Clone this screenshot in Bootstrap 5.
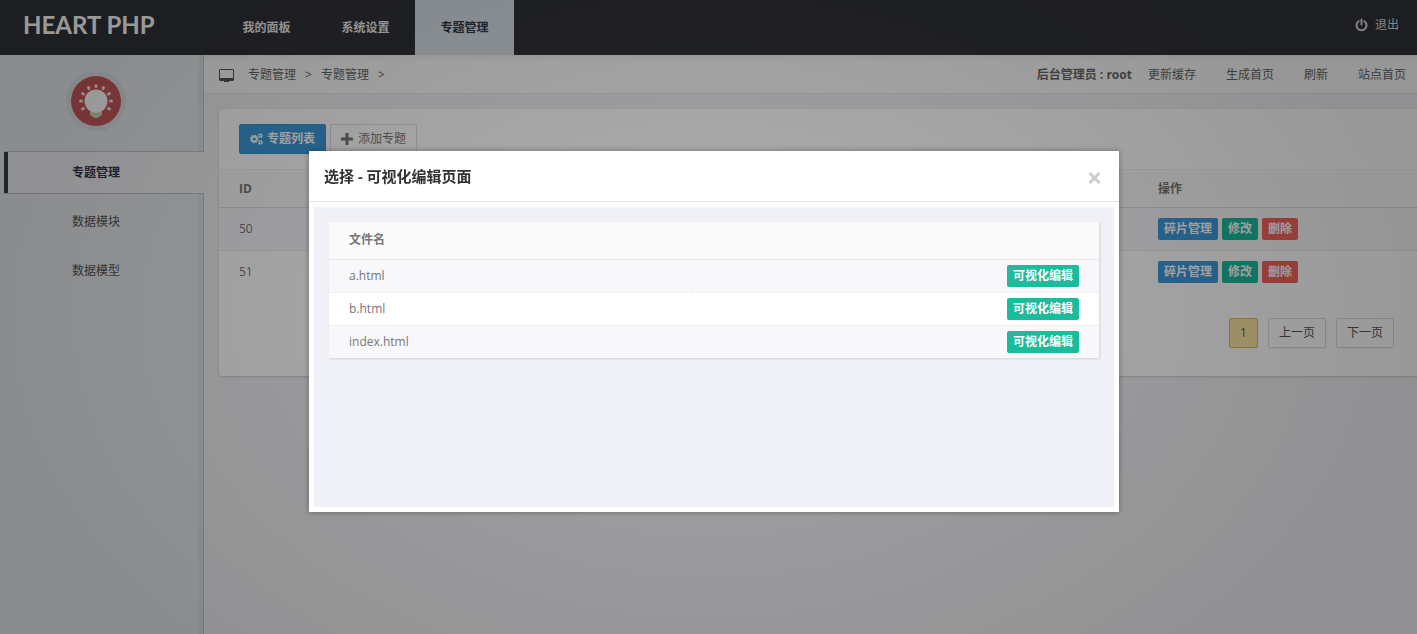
<!DOCTYPE html>
<html lang="zh-CN">
<head>
<meta charset="utf-8">
<meta name="viewport" content="width=device-width, initial-scale=1">
<title>HEART PHP</title>
<link href="https://cdn.jsdelivr.net/npm/bootstrap@5.3.0/dist/css/bootstrap.min.css" rel="stylesheet">
<style>
  body { font: 12px/20px "Open Sans", "Noto Sans CJK SC", sans-serif; color: #777; background: #f0f0f3; }
  a { color: inherit; text-decoration: none; }
  .topbar { height: 55px; background: #313239; color: #fff; }
  .brand { width: 217px; padding-left: 23px; font: 24px/50px Lato, sans-serif; font-weight: 700; color: #fff; }
  .main-tab { width: 99px; height: 55px; line-height: 55px; text-align: center; font-weight: 700; color: #eee; }
  .main-tab.active { background: #d6dfe5; color: #33344a; }
  .logout { padding-right: 18px; height: 50px; color: #ddd; gap: 7px; }
  .sidebar { width: 204px; flex: none; background: linear-gradient(to left, #bfc2c5 1px, #dbe1e4 1px, #dbe1e4 6px, #e6eaed 6px); }
  .bulb { padding: 16px 12px 20px 0; height: 96px; }
  .side-link { height: 49px; line-height: 51px; padding-left: 72px; color: #555; }
  .side-link.active { height: 43px; line-height: 42px; margin-left: 4px; padding-left: 68px; margin-bottom: 2px; background: #f0f0f3; border: 1px solid #bfc2c5; border-width: 1px 0; box-shadow: inset 4px 0 #364150; color: #33344a; font-weight: 700; }
  .crumbs { height: 39px; background: linear-gradient(#eee, #fafafa 6px); border-bottom: 1px solid #e6e6ea; padding: 2px 11px 0 15px; color: #666; }
  .crumbs .trail svg { margin-right: 14px; }
  .crumbs .trail span { padding: 0 9px; }
  .crumbs .links { gap: 30px; }
  .panel { margin: 15px 0 0 15px; background: #fff; border-radius: 3px 0 0 3px; box-shadow: 0 1px 2px rgba(0,0,0,.15); }
  .toolbar { padding: 15px 20px; }
  .tool { height: 30px; font-size: 12px; line-height: 18px; padding: 5px 10px; border-radius: 2px; display: flex; align-items: center; gap: 4px; }
  .tool-blue { background: #3d9ada; border-color: #3891d0; color: #fff; font-weight: 700; }
  .tool-white { background: #fff; border: 1px solid #ddd; color: #777; gap: 5px; }
  .grid { --bs-table-bg: transparent; --bs-table-color: #777; margin: 0; color: #777; }
  .grid > :not(caption) > * > * { padding: 0 20px; height: 43px; border-bottom: 1px dotted #ddd; vertical-align: middle; }
  .grid > thead > tr > th { height: 38px; border-top: 1px solid #f0f0f0; border-bottom: 1px solid #ddd; background: #fafafa; }
  .grid > tbody > tr:nth-child(odd) > td { background: #f8f8fb; }
  .grid > tbody > tr:last-child > td { border-bottom: 0; }
  .ops { width: 279px; }
  .grid-small > thead > tr > th { height: 37px; border-top: 0; border-bottom: 1px solid #e5e5e5; }
  .grid-small > tbody > tr > td { height: 33px; border-bottom-color: #e2e2e2; }
  .tag { display: inline-block; height: 22px; line-height: 22px; padding: 0 6px; border: 0; border-radius: 2px; font-size: 12px; font-weight: 700; color: #fff; }
  .tag-blue { background: #3d9ada; }
  .tag-green { background: #1bbc9b; }
  .tag-red { background: #f3665b; }
  .pager { padding: 24px 23px 28px; gap: 10px; }
  .pager a { height: 30px; line-height: 28px; padding: 0 10px; border: 1px solid #ddd; border-radius: 2px; color: #555; box-shadow: 0 1px 1px rgba(0,0,0,.06); }
  .pager a.active { background: #fbe6a2; border-color: #e9b750; color: #7d6020; }
  .shade { position: fixed; inset: 0; z-index: 1050; background: radial-gradient(ellipse 50% 75% at center, rgba(0,0,0,.31), rgba(0,0,0,.4)); }
  .picker { z-index: 1055; padding-left: 11px; }
  .picker .modal-dialog { max-width: 810px; margin: 151px auto 0; }
  .picker .modal-content { border: 0; border-radius: 0; color: #777; box-shadow: 0 0 6px rgba(0,0,0,.35); }
  .picker .modal-header { height: 51px; padding: 0 15px; border-color: #e5e5e5; }
  .picker .modal-title { font-size: 15px; font-weight: 700; color: #333; }
  .picker .shut { border: 0; background: none; padding: 3px 3px 0 0; color: #ccc; line-height: 0; }
  .picker .modal-body { padding: 5px; }
  .frame { background: #f0f1f6; min-height: 300px; padding: 15px; }
  .frame table { background: #fff; box-shadow: 1px 1px 2px rgba(0,0,0,.12); }
</style>
</head>
<body class="min-vh-100 d-flex flex-column">
  <header class="topbar d-flex align-items-start">
    <a class="brand" href="#">HEART PHP</a>
    <nav class="d-flex">
      <a class="main-tab" href="#">我的面板</a>
      <a class="main-tab" href="#">系统设置</a>
      <a class="main-tab active" href="#">专题管理</a>
    </nav>
    <a class="logout ms-auto d-flex align-items-center" href="#">
      <svg width="13" height="14" viewBox="0 0 13 14" fill="none" stroke="currentColor" stroke-width="2" stroke-linecap="round"><path d="M3.6 3.2a5 5 0 1 0 5.8 0M6.500 1.500v5"/></svg>退出</a>
  </header>
  <div class="d-flex flex-grow-1">
    <aside class="sidebar">
      <div class="bulb text-center">
        <svg width="60" height="60" viewBox="0 0 60 60">
          <circle cx="30" cy="30" r="30" fill="#dce2e4"/><circle cx="30" cy="30" r="25" fill="#c6585b"/>
          <g stroke="#efead5" stroke-width="3" stroke-linecap="round">
            <path d="M30 14.500v1M22.500 16.500l.5 1M37.500 16.500l-.5 1M16.500 22.500l1 .5M43.500 22.500l-1 .5M14.500 30h1M45.500 30h-1M16.500 38l1-.5M43.500 38l-1-.5"/>
          </g>
          <path d="M24 39h12v5l-3 2-3 1.500-3-1.500-3-2z" fill="#d5d1bd"/><circle cx="30" cy="30" r="11.500" fill="#fff"/>
        </svg>
      </div>
      <nav class="d-flex flex-column">
        <a class="side-link active" href="#">专题管理</a>
        <a class="side-link" href="#">数据模块</a>
        <a class="side-link" href="#">数据模型</a>
      </nav>
    </aside>
    <main class="flex-grow-1">
      <div class="crumbs d-flex align-items-center justify-content-between">
        <div class="trail d-flex align-items-center">
          <svg width="15" height="13" viewBox="0 0 15 13"><path fill="#555" fill-rule="evenodd" d="M1 0h13l1 1v10l-1 1h-4v1H5v-1H1l-1-1V1zM1 1v8h13V1z"/></svg>
          <a href="#">专题管理</a><span>&gt;</span><a href="#">专题管理</a><span>&gt;</span>
        </div>
        <div class="d-flex align-items-center">
          <strong class="me-3">后台管理员 : root</strong>
          <div class="links d-flex"><a href="#">更新缓存</a><a href="#">生成首页</a><a href="#">刷新</a><a href="#">站点首页</a></div>
        </div>
      </div>
      <section class="panel">
        <div class="d-flex gap-1 toolbar">
          <button class="btn tool tool-blue" type="button">
            <svg width="13" height="12" viewBox="0 0 14 13" fill="none" stroke="currentColor"><circle cx="4.500" cy="6.500" r="2.700" stroke-width="2"/><circle cx="4.500" cy="6.500" r="4" stroke-width="1.400" stroke-dasharray="1.600 1.540"/><circle cx="11.300" cy="2.800" r="1.500" stroke-width="1.200"/><circle cx="11.300" cy="2.800" r="2.300" stroke-dasharray="1 .8"/><circle cx="11.300" cy="10.200" r="1.500" stroke-width="1.200"/><circle cx="11.300" cy="10.200" r="2.300" stroke-dasharray="1 .8"/></svg>专题列表</button>
          <button class="btn tool tool-white" type="button">
            <svg width="12" height="12" viewBox="0 0 12 12"><path fill="currentColor" d="M4.500 0h3v4.500H12v3H7.500V12h-3V7.500H0v-3h4.500z"/></svg>添加专题</button>
        </div>
        <table class="table grid">
          <thead><tr><th>ID</th><th class="ops">操作</th></tr></thead>
          <tbody>
            <tr><td>50</td><td><div class="d-flex gap-1"><button class="tag tag-blue">碎片管理</button><button class="tag tag-green">修改</button><button class="tag tag-red">删除</button></div></td></tr>
            <tr><td>51</td><td><div class="d-flex gap-1"><button class="tag tag-blue">碎片管理</button><button class="tag tag-green">修改</button><button class="tag tag-red">删除</button></div></td></tr>
          </tbody>
        </table>
        <nav class="pager d-flex justify-content-end">
          <a class="active" href="#">1</a><a href="#">上一页</a><a href="#">下一页</a>
        </nav>
      </section>
    </main>
  </div>

  <div class="shade"></div>
  <div class="modal show d-block picker" tabindex="-1" role="dialog" aria-labelledby="pickerTitle">
    <div class="modal-dialog">
      <div class="modal-content">
        <div class="modal-header">
          <h4 class="modal-title" id="pickerTitle">选择 - 可视化编辑页面</h4>
          <button class="shut" type="button" aria-label="Close"><svg width="13" height="12" viewBox="0 0 13 12"><path stroke="currentColor" stroke-width="3" d="M1.500 1l10 10M11.500 1l-10 10"/></svg></button>
        </div>
        <div class="modal-body">
          <div class="frame">
            <table class="table grid grid-small">
              <thead><tr><th>文件名</th><th></th></tr></thead>
              <tbody>
                <tr><td>a.html</td><td class="text-end"><button class="tag tag-green">可视化编辑</button></td></tr>
                <tr><td>b.html</td><td class="text-end"><button class="tag tag-green">可视化编辑</button></td></tr>
                <tr><td>index.html</td><td class="text-end"><button class="tag tag-green">可视化编辑</button></td></tr>
              </tbody>
            </table>
          </div>
        </div>
      </div>
    </div>
  </div>
<script src="https://cdn.jsdelivr.net/npm/bootstrap@5.3.0/dist/js/bootstrap.bundle.min.js"></script>
</body>
</html>
